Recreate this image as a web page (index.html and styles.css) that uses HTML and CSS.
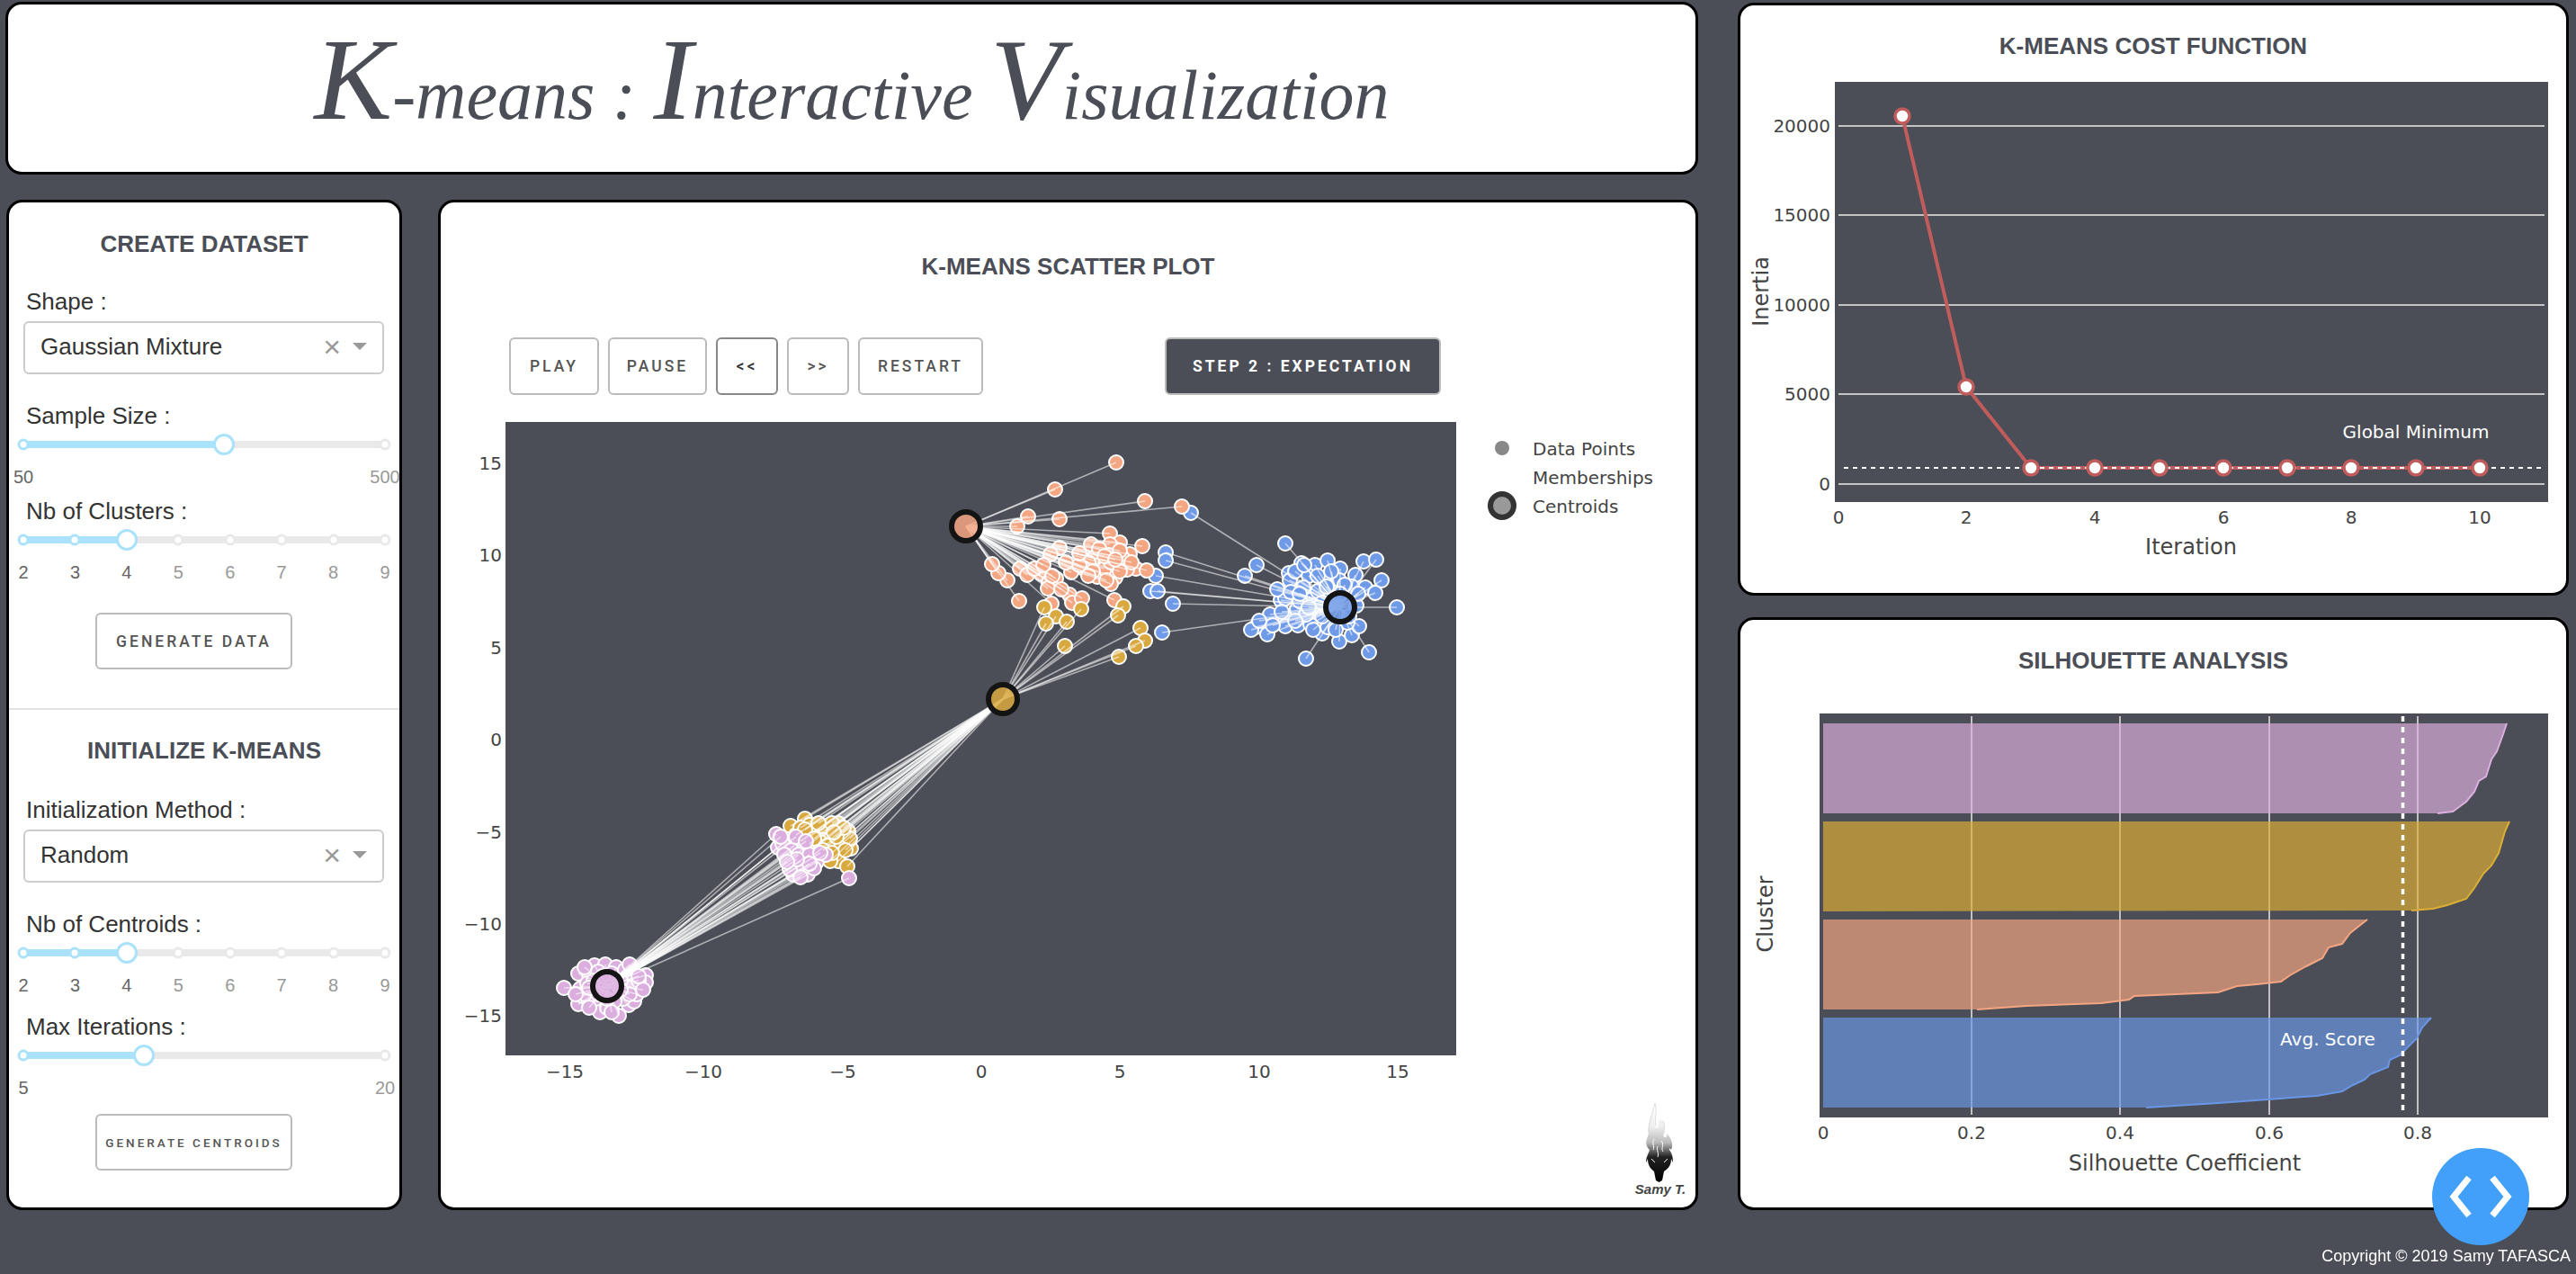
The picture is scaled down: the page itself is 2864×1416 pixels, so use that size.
FILE: index.html
```html
<!DOCTYPE html>
<html lang="en">
<head>
  <meta charset="UTF-8">
  <title>K-means : Interactive Visualization</title>
  <link rel="stylesheet" href="styles.css">
</head>
<body>
  <div class="app">
    <div class="left-col">
      <header class="panel banner">
        <h1><span class="cap">K</span>-means : <span class="cap">I</span>nteractive <span class="cap">V</span>isualization</h1>
      </header>

      <div class="work-row">
        <aside class="panel controls">
          <h3 class="panel-title first">Create Dataset</h3>
          <div class="form">
            <label class="field-label label-after-title">Shape :</label>
            <div class="dropdown">
              <span>Gaussian Mixture</span>
              <span class="clear">&times;</span>
              <span class="caret"></span>
            </div>

            <label class="field-label label-after-select">Sample Size :</label>
            <div class="slider">
              <div class="rail"></div>
              <div class="track" style="width: 55.5%"></div>
              <span class="dot on" style="left: 0%"></span>
              <span class="dot" style="left: 100%"></span>
              <span class="handle" style="left: 55.5%"></span>
              <span class="mark on" style="left: 0%">50</span>
              <span class="mark" style="left: 100%">500</span>
            </div>

            <label class="field-label">Nb of Clusters :</label>
            <div class="slider">
              <div class="rail"></div>
              <div class="track" style="width: 28.57%"></div>
              <span class="dot on" style="left: 0%"></span>
              <span class="dot on" style="left: 14.29%"></span>
              <span class="dot" style="left: 42.86%"></span>
              <span class="dot" style="left: 57.14%"></span>
              <span class="dot" style="left: 71.43%"></span>
              <span class="dot" style="left: 85.71%"></span>
              <span class="dot" style="left: 100%"></span>
              <span class="handle" style="left: 28.57%"></span>
              <span class="mark on" style="left: 0%">2</span>
              <span class="mark on" style="left: 14.29%">3</span>
              <span class="mark on" style="left: 28.57%">4</span>
              <span class="mark" style="left: 42.86%">5</span>
              <span class="mark" style="left: 57.14%">6</span>
              <span class="mark" style="left: 71.43%">7</span>
              <span class="mark" style="left: 85.71%">8</span>
              <span class="mark" style="left: 100%">9</span>
            </div>
          </div>
          <button class="btn side-btn gen-data">Generate Data</button>

          <hr class="divider">

          <h3 class="panel-title second">Initialize K-means</h3>
          <div class="form">
            <label class="field-label label-after-title">Initialization Method :</label>
            <div class="dropdown">
              <span>Random</span>
              <span class="clear">&times;</span>
              <span class="caret"></span>
            </div>

            <label class="field-label label-after-select">Nb of Centroids :</label>
            <div class="slider">
              <div class="rail"></div>
              <div class="track" style="width: 28.57%"></div>
              <span class="dot on" style="left: 0%"></span>
              <span class="dot on" style="left: 14.29%"></span>
              <span class="dot" style="left: 42.86%"></span>
              <span class="dot" style="left: 57.14%"></span>
              <span class="dot" style="left: 71.43%"></span>
              <span class="dot" style="left: 85.71%"></span>
              <span class="dot" style="left: 100%"></span>
              <span class="handle" style="left: 28.57%"></span>
              <span class="mark on" style="left: 0%">2</span>
              <span class="mark on" style="left: 14.29%">3</span>
              <span class="mark on" style="left: 28.57%">4</span>
              <span class="mark" style="left: 42.86%">5</span>
              <span class="mark" style="left: 57.14%">6</span>
              <span class="mark" style="left: 71.43%">7</span>
              <span class="mark" style="left: 85.71%">8</span>
              <span class="mark" style="left: 100%">9</span>
            </div>

            <label class="field-label label-spaced">Max Iterations :</label>
            <div class="slider">
              <div class="rail"></div>
              <div class="track" style="width: 33.33%"></div>
              <span class="dot on" style="left: 0%"></span>
              <span class="dot" style="left: 100%"></span>
              <span class="handle" style="left: 33.33%"></span>
              <span class="mark on" style="left: 0%">5</span>
              <span class="mark" style="left: 100%">20</span>
            </div>
          </div>
          <button class="btn side-btn gen-centroids">Generate Centroids</button>
        </aside>

        <main class="panel scatter-panel">
          <h3 class="panel-title scatter-title">K-means Scatter Plot</h3>
          <div class="player">
            <button class="btn btn-play">Play</button>
            <button class="btn btn-pause">Pause</button>
            <button class="btn btn-step focused">&lt;&lt;</button>
            <button class="btn btn-step">&gt;&gt;</button>
            <button class="btn btn-restart">Restart</button>
            <button class="btn step-label">Step 2 : Expectation</button>
          </div>

          <svg class="chart scatter-chart" viewBox="490 460 1394 882">
            <rect class="plot-bg" x="562" y="469" width="1057" height="704"/>
            <g id="scatter"></g>

            <g class="tick">
              <text x="628" y="1191">&minus;15</text>
              <text x="782" y="1191">&minus;10</text>
              <text x="937" y="1191">&minus;5</text>
              <text x="1091" y="1191">0</text>
              <text x="1245" y="1191">5</text>
              <text x="1400" y="1191">10</text>
              <text x="1554" y="1191">15</text>
            </g>
            <g class="tick tick-y">
              <text x="558" y="515">15</text>
              <text x="558" y="617">10</text>
              <text x="558" y="720">5</text>
              <text x="558" y="822">0</text>
              <text x="558" y="925">&minus;5</text>
              <text x="558" y="1027">&minus;10</text>
              <text x="558" y="1129">&minus;15</text>
            </g>

            <circle cx="1670" cy="498" r="8" fill="#888"/>
            <circle cx="1670" cy="562" r="13" fill="#999" stroke="#333" stroke-width="6"/>
            <g class="tick tick-legend">
              <text x="1704" y="499">Data Points</text>
              <text x="1704" y="531">Memberships</text>
              <text x="1704" y="563">Centroids</text>
            </g>
          </svg>

          <div class="signature">
            <svg width="60" height="92" viewBox="0 0 60 92">
              <defs>
                <linearGradient id="flame" x1="0" y1="0" x2="0" y2="1">
                  <stop offset="0" stop-color="#fff"/>
                  <stop offset="0.3" stop-color="#eee"/>
                  <stop offset="0.5" stop-color="#bbb"/>
                  <stop offset="0.68" stop-color="#222"/>
                  <stop offset="1" stop-color="#000"/>
                </linearGradient>
              </defs>
              <path fill="url(#flame)" d="M17 33C15 24 21 14 24 0C26 10 22 18 24 26C26 30 28 28 28 20C33 16 34 22 33 20C36 26 34 32 33 36C35 40 38 38 37 34C42 38 45 46 42 52C41 50 40 50 40 52C43 56 44 60 44 66L42 62C42 68 40 72 34 76L32 86L28.5 88L25 86L23 76C18 72 16 68 16 62L14 66C14 60 17 56 18 52C15 50 13 44 15 40Z"/>
              <path fill="none" stroke="#d0d0d0" stroke-width="0.7" d="M24 0C21 12 16 24 17 33M24 0C27 10 23 18 25 26M33 20C36 26 34 32 33 36"/>
              <path fill="none" stroke="#fff" stroke-width="1" d="M23 40C20 44 24 48 22 52M31 42C35 46 30 50 33 54M27 48C25 52 29 56 27 60M20 62L24 66M38 62L34 66"/>
            </svg>
            <span>Samy T.</span>
          </div>
        </main>
      </div>
    </div>

    <div class="right-col">
      <section class="panel graph-panel">
        <h3 class="panel-title graph-title">K-means Cost Function</h3>
        <svg class="chart" viewBox="1935 66 918 593" width="918" height="593">
          <rect class="plot-bg" x="2040" y="91" width="793" height="467"/>
          <g class="grid">
            <line x1="2044" y1="140" x2="2829" y2="140"/>
            <line x1="2044" y1="239" x2="2829" y2="239"/>
            <line x1="2044" y1="339" x2="2829" y2="339"/>
            <line x1="2044" y1="438" x2="2829" y2="438"/>
            <line x1="2044" y1="538" x2="2829" y2="538"/>
          </g>
          <line class="min-line" x1="2050" y1="520" x2="2826" y2="520"/>
          <polyline class="cost-line" points="2115,129 2186,430 2258,520 2329,520 2401,520 2472,520 2543,520 2614,520 2686,520 2757,520"/>
          <line class="min-line over" x1="2268" y1="520" x2="2750" y2="520"/>
          <g class="cost-dots">
            <circle cx="2115" cy="129" r="8"/>
            <circle cx="2186" cy="430" r="8"/>
            <circle cx="2258" cy="520" r="8"/>
            <circle cx="2329" cy="520" r="8"/>
            <circle cx="2401" cy="520" r="8"/>
            <circle cx="2472" cy="520" r="8"/>
            <circle cx="2543" cy="520" r="8"/>
            <circle cx="2614" cy="520" r="8"/>
            <circle cx="2686" cy="520" r="8"/>
            <circle cx="2757" cy="520" r="8"/>
          </g>
          <text class="note" x="2686" y="480">Global Minimum</text>
          <g class="tick tick-y">
            <text x="2035" y="140">20000</text>
            <text x="2035" y="239">15000</text>
            <text x="2035" y="339">10000</text>
            <text x="2035" y="438">5000</text>
            <text x="2035" y="538">0</text>
          </g>
          <g class="tick">
            <text x="2044" y="575">0</text>
            <text x="2186" y="575">2</text>
            <text x="2329" y="575">4</text>
            <text x="2472" y="575">6</text>
            <text x="2614" y="575">8</text>
            <text x="2757" y="575">10</text>
          </g>
          <text class="axis-title" x="2436" y="608">Iteration</text>
          <text class="axis-title" transform="translate(1958 324) rotate(-90)">Inertia</text>
        </svg>
      </section>

      <section class="panel graph-panel">
        <h3 class="panel-title graph-title">Silhouette Analysis</h3>
        <svg class="chart" viewBox="1935 749 918 593" width="918" height="593">
          <rect class="plot-bg" x="2023" y="793" width="810" height="449"/>
          <g class="grid thin">
            <line x1="2192" y1="796" x2="2192" y2="1239"/>
            <line x1="2357" y1="796" x2="2357" y2="1239"/>
            <line x1="2523" y1="796" x2="2523" y2="1239"/>
            <line x1="2688" y1="796" x2="2688" y2="1239"/>
          </g>
          <polygon class="bar" fill="#dcaedf" points="2027,804 2787,804 2783,816 2776,835 2770,844 2764,863 2756,868 2751,880 2742,891 2727,902 2710,904 2027,904"/>
          <polyline class="bar-edge" stroke="#dcaedf" points="2787,804 2783,816 2776,835 2770,844 2764,863 2756,868 2751,880 2742,891 2727,902 2710,904"/>
          <polygon class="bar" fill="#dcae35" points="2027,913 2790,913 2785,924 2778,948 2770,962 2761,971 2751,987 2742,999 2721,1006 2705,1010 2681,1012 2027,1013"/>
          <polyline class="bar-edge" stroke="#dcae35" points="2790,913 2785,924 2778,948 2770,962 2761,971 2751,987 2742,999 2721,1006 2705,1010 2681,1012"/>
          <polygon class="bar" fill="#f4a582" points="2027,1022 2632,1022 2613,1037 2604,1049 2589,1053 2582,1065 2564,1074 2546,1084 2536,1091 2509,1094 2487,1096 2466,1103 2373,1107 2367,1111 2336,1115 2253,1118 2198,1122 2027,1122"/>
          <polyline class="bar-edge" stroke="#f4a582" points="2632,1022 2613,1037 2604,1049 2589,1053 2582,1065 2564,1074 2546,1084 2536,1091 2509,1094 2487,1096 2466,1103 2373,1107 2367,1111 2336,1115 2253,1118 2198,1122"/>
          <polygon class="bar" fill="#6a96e6" points="2027,1131 2703,1131 2693,1142 2687,1154 2668,1173 2657,1178 2655,1186 2635,1194 2629,1200 2616,1206 2604,1213 2576,1218 2466,1226 2386,1231 2027,1231"/>
          <polyline class="bar-edge" stroke="#6a96e6" points="2703,1131 2693,1142 2687,1154 2668,1173 2657,1178 2655,1186 2635,1194 2629,1200 2616,1206 2604,1213 2576,1218 2466,1226 2386,1231"/>
          <line class="avg-line" x1="2671.5" y1="796" x2="2671.5" y2="1239"/>
          <text class="note" x="2588" y="1155">Avg. Score</text>
          <g class="tick">
            <text x="2027" y="1259">0</text>
            <text x="2192" y="1259">0.2</text>
            <text x="2357" y="1259">0.4</text>
            <text x="2523" y="1259">0.6</text>
            <text x="2688" y="1259">0.8</text>
          </g>
          <text class="axis-title" x="2429" y="1293">Silhouette Coefficient</text>
          <text class="axis-title" transform="translate(1963 1016) rotate(-90)">Cluster</text>
        </svg>
      </section>
    </div>
  </div>

  <a class="fab" href="#">
    <svg width="108" height="108" viewBox="0 0 108 108">
      <path d="M41 33L24 54L41 75M67 33L84 54L67 75" fill="none" stroke="#fff" stroke-width="7"/>
    </svg>
  </a>
  <p class="copyright">Copyright &copy; 2019 Samy TAFASCA</p>

  <script src="chart.js"></script>
</body>
</html>
```

FILE: styles.css
```css
:root {
  --bg: #4b4e56;
  --ink: #333;
  --rail: #e9e9e9;
  --track: #abe2fb;
}

* {
  box-sizing: border-box;
}

html, body {
  height: 100%;
}

body {
  margin: 0;
  background-color: var(--bg);
  color: var(--ink);
  font-family: "Liberation Sans", Arial, sans-serif;
  overflow: hidden;
}

.app {
  display: flex;
  justify-content: space-between;
  padding: 2px 8px 0 6px;
}

.left-col {
  width: 1882px;
  display: flex;
  flex-direction: column;
  gap: 28px;
}

.right-col {
  width: 924px;
  display: flex;
  flex-direction: column;
  gap: 24px;
  padding-top: 1px;
}

.panel {
  position: relative;
  background: #fff;
  border: 3px solid #000;
  border-radius: 18px;
}

.banner {
  height: 192px;
  text-align: center;
}

h1 {
  margin: 0;
  padding-top: 33px;
  font-family: "Liberation Serif", serif;
  font-style: italic;
  font-weight: normal;
  font-size: 78px;
  line-height: 120px;
  color: var(--bg);
}

.cap {
  font-size: 130px;
  line-height: 100px;
}

.work-row {
  display: flex;
  height: 1123px;
  gap: 40px;
  padding-left: 1px;
}

.controls {
  width: 440px;
  flex: none;
}

.scatter-panel {
  flex: 1;
}

.panel-title {
  margin: 0;
  text-align: center;
  text-transform: uppercase;
  font-size: 26px;
  line-height: 30px;
  font-weight: bold;
  color: var(--bg);
}

.panel-title.first {
  margin-top: 31px;
}

.panel-title.second {
  margin-top: 30px;
}

.form {
  padding-left: 16px;
}

.field-label {
  display: block;
  padding-left: 3px;
  font-size: 26px;
  line-height: 30px;
}

.label-after-title {
  margin-top: 34px;
}

.second + .form .label-after-title {
  margin-top: 36px;
}

.label-after-select {
  margin-top: 31px;
}

.label-spaced {
  margin-top: 8px;
}

.dropdown {
  display: flex;
  align-items: center;
  width: 401px;
  height: 59px;
  margin-top: 7px;
  padding: 0 0 3px 17px;
  border: 2px solid #ccc;
  border-radius: 6px;
  font-size: 26px;
}

.clear {
  margin-left: auto;
  color: #999;
  font-size: 34px;
  line-height: 1;
}

.caret {
  width: 0;
  height: 0;
  margin: 0 17px 0 13px;
  border-style: solid;
  border-width: 8px 8px 0;
  border-color: #999 transparent transparent;
}

.slider {
  position: relative;
  width: 402px;
  height: 76px;
}

.rail, .track {
  position: absolute;
  top: 13px;
  left: 0;
  height: 8px;
}

.rail {
  width: 100%;
  background: var(--rail);
  border-radius: 4px;
}

.track {
  background: var(--track);
  border-radius: 4px;
}

.dot, .handle {
  position: absolute;
  background: #fff;
  border-radius: 50%;
  transform: translate(-50%, -50%);
}

.dot {
  top: 17px;
  width: 13px;
  height: 13px;
  border: 3px solid var(--rail);
}

.dot.on {
  border-color: var(--track);
}

.handle {
  top: 17px;
  width: 24px;
  height: 24px;
  border: 3px solid var(--track);
}

.mark {
  position: absolute;
  top: 41px;
  color: #999;
  font-size: 20px;
  line-height: 24px;
  transform: translateX(-50%);
}

.mark.on {
  color: #666;
}

.btn {
  display: block;
  height: 64px;
  padding: 0;
  background: transparent;
  border: 2px solid #bbb;
  border-radius: 6px;
  color: #555;
  font-family: Roboto, "Liberation Sans", sans-serif;
  font-size: 17.5px;
  font-weight: 500;
  letter-spacing: 3px;
  text-transform: uppercase;
}

.side-btn {
  width: 219px;
  height: 63px;
  margin-left: 96px;
}

.gen-data {
  margin-top: 22px;
}

.gen-centroids {
  margin-top: 6px;
  font-size: 13.5px;
}

.divider {
  height: 2px;
  margin: 43px 0 0;
  border: 0;
  background: #e1e1e1;
}

.scatter-title {
  margin-top: 56px;
}

.player {
  display: flex;
  gap: 10px;
  width: 1036px;
  margin: 64px 0 0 76px;
}

.btn-play {
  width: 100px;
}

.btn-pause {
  width: 110px;
}

.btn-step {
  width: 69px;
}

.btn-restart {
  width: 139px;
}

.focused {
  border-color: #888;
  color: #333;
}

.step-label {
  width: 307px;
  margin-left: auto;
  background: var(--bg);
  color: #fff;
  font-weight: 700;
}

.chart {
  display: block;
}

.scatter-chart {
  width: 1394px;
  height: 882px;
  margin-top: 21px;
}

.plot-bg {
  fill: var(--bg);
}

.chart text {
  font-family: "DejaVu Sans", Verdana, sans-serif;
  dominant-baseline: central;
}

.tick text {
  fill: #444;
  font-size: 20px;
  text-anchor: middle;
}

.tick-y text {
  text-anchor: end;
}

.tick-legend text {
  text-anchor: start;
}

.chart .axis-title {
  fill: #444;
  font-size: 24px;
  text-anchor: middle;
}

.chart .note {
  fill: #fff;
  font-size: 20px;
  text-anchor: middle;
}

.grid line {
  stroke: #c4c4c4;
  stroke-width: 2;
}

.grid.thin line {
  stroke: #e8e8e8;
  stroke-width: 1.5;
}

.min-line {
  stroke: #fff;
  stroke-width: 2;
  stroke-dasharray: 5 5;
}

.cost-line {
  fill: none;
  stroke: #c05c5c;
  stroke-width: 4;
}

.cost-dots circle {
  fill: #fff;
  stroke: #c05c5c;
  stroke-width: 3.5;
}

.bar {
  fill-opacity: 0.68;
}

.bar-edge {
  fill: none;
  stroke-width: 2;
}

.avg-line {
  stroke: #fff;
  stroke-width: 3.5;
  stroke-dasharray: 6 6;
}

.graph-panel {
  height: 659px;
}

.graph-title {
  margin-top: 30px;
}

.signature {
  position: absolute;
  right: 6px;
  bottom: 12px;
  width: 66px;
  text-align: center;
}

.signature svg {
  display: block;
  margin: 0 auto -4px;
}

.signature span {
  display: block;
  font-style: italic;
  font-weight: bold;
  font-size: 15px;
  line-height: 16px;
  color: #444;
  white-space: nowrap;
}

.fab {
  position: fixed;
  left: 2704px;
  top: 1276px;
  width: 108px;
  height: 108px;
  background: #42a0fa;
  border-radius: 50%;
}

.fab svg {
  display: block;
}

.copyright {
  position: fixed;
  right: 6px;
  bottom: 9px;
  margin: 0;
  color: #fff;
  font-size: 18px;
  line-height: 22px;
}
```

FILE: chart.js
```js
// centroid positions and points are in page pixels, the svg viewBox uses the same numbers
const clusters = [
  {
    color: '#6f9ae8', centroid: [1490, 675],
    points: [
      [1324,570],[1429,604],[1296,614],[1296,623],[1397,628],[1384,640],[1285,640],[1279,657],[1287,657],
      [1304,671],[1292,703],[1447,626],[1462,628],[1476,623],[1490,632],[1516,624],[1530,622],[1507,639],
      [1536,645],[1518,653],[1529,659],[1433,637],[1434,645],[1455,640],[1472,643],[1489,645],[1503,652],
      [1449,653],[1424,667],[1429,665],[1457,667],[1480,657],[1442,677],[1412,683],[1429,687],[1396,697],
      [1391,700],[1409,705],[1429,696],[1443,695],[1457,694],[1470,704],[1476,697],[1489,713],[1503,706],
      [1511,696],[1498,692],[1522,725],[1452,732],[1553,675],[1508,673],[1463,680],[1452,683],[1478,663],
      [1465,657],[1440,635],[1450,628],[1465,640],[1480,635],[1495,650],[1510,660],[1420,655],[1435,658],
      [1445,668],[1470,670],[1455,675],[1425,680],[1440,690],[1415,695],[1400,690],[1470,685],[1485,700],
      [1500,685],[1460,700],[1445,660],[1475,652],[1490,660]
    ]
  },
  {
    color: '#f4a582', centroid: [1074, 585],
    points: [
      [1241,514],[1173,544],[1273,557],[1314,563],[1143,574],[1178,577],[1131,585],[1234,593],[1213,605],
      [1245,603],[1270,607],[1234,605],[1178,609],[1168,616],[1256,616],[1216,620],[1233,617],[1248,620],
      [1210,625],[1205,632],[1191,636],[1263,632],[1275,634],[1253,633],[1225,637],[1220,641],[1240,642],
      [1235,649],[1228,632],[1134,632],[1142,639],[1158,638],[1166,647],[1174,643],[1165,654],[1120,645],
      [1110,637],[1103,627],[1133,668],[1189,661],[1192,670],[1203,665],[1169,671],[1239,667],[1200,628],
      [1215,635],[1235,625],[1245,612],[1222,610],[1258,625],[1210,640],[1230,645],[1245,635],[1150,632],
      [1160,628],[1170,640],[1180,655],[1228,618],[1240,622],[1200,615],[1185,625]
    ]
  },
  {
    color: '#d9a93f', centroid: [1115, 777],
    points: [
      [1161,675],[1174,685],[1163,693],[1186,691],[1202,677],[1249,674],[1243,684],[1184,718],[1268,698],
      [1273,712],[1263,718],[1244,730],[895,910],[879,918],[900,917],[932,915],[943,924],[920,923],[913,930],
      [900,930],[885,928],[938,933],[907,942],[932,938],[946,943],[923,933],[932,957],[942,963],[923,957],
      [890,920],[905,925],[915,918],[925,915],[935,925],[945,932],[890,935],[900,938],[912,936],[920,940],
      [930,930],[940,945],[905,950],[915,945],[925,948],[895,922],[910,915],[938,920],[905,932],[927,925]
    ]
  },
  {
    color: '#dcaedf', centroid: [675, 1096],
    points: [
      [863,927],[876,933],[865,942],[883,940],[894,943],[877,952],[890,957],[908,958],[918,950],[882,972],
      [895,968],[898,972],[944,976],[887,963],[870,938],[880,945],[888,950],[900,950],[872,950],[885,930],
      [896,935],[905,965],[878,966],[890,975],[900,960],[912,948],[868,930],[886,955],[875,958],
      [627,1098],[643,1082],[661,1073],[673,1072],[685,1075],[718,1084],[718,1092],[703,1087],[643,1116],
      [648,1107],[645,1099],[660,1113],[667,1125],[675,1120],[688,1129],[699,1117],[705,1113],[708,1105],
      [703,1095],[693,1110],[655,1083],[697,1083],[683,1113],[653,1093],[650,1075],[665,1080],[680,1082],
      [695,1078],[710,1090],[690,1090],[650,1105],[660,1090],[640,1105],[700,1105],[675,1110],[665,1105],
      [715,1100],[655,1120],[680,1125],[670,1085],[690,1100],[710,1085],[700,1072],[655,1098]
    ]
  }
];

const svgNS = 'http://www.w3.org/2000/svg';
const scatter = document.getElementById('scatter');

function add(tag, attrs) {
  const el = document.createElementNS(svgNS, tag);
  Object.keys(attrs).forEach(key => el.setAttribute(key, attrs[key]));
  scatter.appendChild(el);
}

clusters.forEach(({ color, points }) => {
  points.forEach(([x, y]) => {
    add('circle', { cx: x, cy: y, r: 8, fill: color, stroke: '#fff', 'stroke-width': 2 });
  });
});

clusters.forEach(({ centroid, points }) => {
  points.forEach(([x, y]) => {
    add('line', {
      x1: centroid[0], y1: centroid[1], x2: x, y2: y,
      stroke: '#fff', 'stroke-opacity': 0.55, 'stroke-width': 1.6
    });
  });
});

clusters.forEach(({ color, centroid }) => {
  add('circle', {
    cx: centroid[0], cy: centroid[1], r: 16,
    fill: color, 'fill-opacity': 0.85, stroke: '#141414', 'stroke-width': 6
  });
});
```
